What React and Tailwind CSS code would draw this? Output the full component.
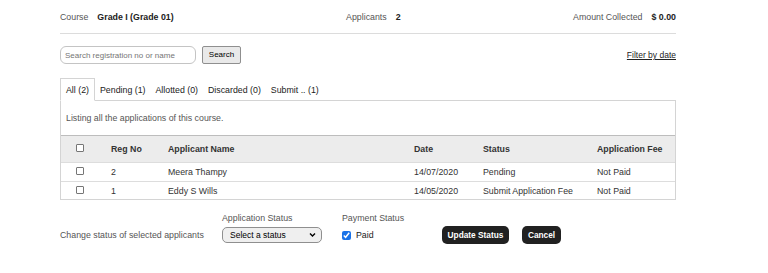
import React from "react";

function Check({ className = "" }) {
  return (
    <span className={"inline-block w-[8px] h-[8px] border border-[#767676] rounded-[1px] bg-white " + className} />
  );
}

export default function App() {
  const rows = [
    { reg: "2", name: "Meera Thampy", date: "14/07/2020", status: "Pending", fee: "Not Paid" },
    { reg: "1", name: "Eddy S Wills", date: "14/05/2020", status: "Submit Application Fee", fee: "Not Paid" },
  ];
  const tabs = ["All (2)", "Pending (1)", "Allotted (0)", "Discarded (0)", "Submit .. (1)"];
  return (
    <div className="w-[768px] h-[273px] bg-white font-['Liberation_Sans',Arial,sans-serif] text-[8.8px] leading-[10px] text-[#333]">
      <div className="ml-[60px] w-[616px]">
        {/* summary row */}
        <div className="h-[34px] flex items-center justify-between border-b border-[#dcdcdc]">
          <div className="flex items-center">
            <span className="text-[#555]">Course</span>
            <span className="ml-[9px] font-bold text-[#222]">Grade I (Grade 01)</span>
          </div>
          <div className="flex items-center">
            <span className="text-[#555]">Applicants</span>
            <span className="ml-[9px] font-bold text-[#222]">2</span>
          </div>
          <div className="flex items-center">
            <span className="text-[#555]">Amount Collected</span>
            <span className="ml-[9px] font-bold text-[#222]">$ 0.00</span>
          </div>
        </div>

        {/* search row */}
        <div className="mt-[12px] h-[18px] flex items-center justify-between">
          <div className="flex items-center">
            <input
              placeholder="Search registration no or name"
              className="w-[136px] h-[18px] rounded-[6px] border border-[#c4c4c4] px-[4px] text-[8px] text-[#333] placeholder:text-[#757575] outline-none"
            />
            <button className="ml-[6px] w-[39px] h-[18px] border border-[#8f8f8f] bg-[#e9e9e9] rounded-[2px] text-[8px] text-black">
              Search
            </button>
          </div>
          <a className="underline text-[8.5px] text-[#222]">Filter by date</a>
        </div>

        {/* tabs */}
        <div className="mt-[14px] flex h-[22px]">
          {tabs.map((t, i) => (
            <div
              key={t}
              className={
                "h-[23px] flex items-center border " +
                (i === 0
                  ? "px-[5px] border-[#d4d4d4] border-b-white bg-white relative z-10"
                  : "px-[4px] border-transparent")
              }
            >
              <span className="text-[#222]">{t}</span>
            </div>
          ))}
        </div>

        {/* panel */}
        <div className="border border-[#d4d4d4] h-[100px]">
          <div className="h-[34px] flex items-center pl-[5px] text-[#555]">
            Listing all the applications of this course.
          </div>
          <table className="w-full border-collapse table-fixed">
            <colgroup>
              <col className="w-[44px]" />
              <col className="w-[57px]" />
              <col className="w-[246px]" />
              <col className="w-[69px]" />
              <col className="w-[114px]" />
              <col />
            </colgroup>
            <thead>
              <tr className="h-[27px] bg-[#ececec] border-t border-[#bdbdbd]">
                <th className="text-left pl-[15px] font-normal"><Check className="border-[#8a8a8a]" /></th>
                <th className="text-left pl-[6px] font-bold">Reg No</th>
                <th className="text-left pl-[6px] font-bold">Applicant Name</th>
                <th className="text-left pl-[6px] font-bold">Date</th>
                <th className="text-left pl-[6px] font-bold">Status</th>
                <th className="text-left pl-[6px] font-bold">Application Fee</th>
              </tr>
            </thead>
            <tbody>
              {rows.map((r) => (
                <tr key={r.reg} className="h-[19px] border-t border-[#dddddd]">
                  <td className="pl-[15px]"><Check className="border-[#8a8a8a]" /></td>
                  <td className="pl-[6px]">{r.reg}</td>
                  <td className="pl-[6px]">{r.name}</td>
                  <td className="pl-[6px]">{r.date}</td>
                  <td className="pl-[6px]">{r.status}</td>
                  <td className="pl-[6px]">{r.fee}</td>
                </tr>
              ))}
            </tbody>
          </table>
        </div>

        {/* bulk actions */}
        <div className="mt-[13px] flex">
          <div className="w-[162px] flex flex-col gap-[3px]">
            <div className="h-[10px]" />
            <div className="h-[18px] flex items-center text-[#555]">Change status of selected applicants</div>
          </div>
          <div className="w-[120px] flex flex-col gap-[3px]">
            <div className="h-[10px] text-[#555]">Application Status</div>
            <div className="h-[18px] flex items-center">
              <div className="relative w-[100px] h-[16px]">
                <select className="appearance-none w-full h-full rounded-[5px] border border-[#8f8f8f] bg-[#efefef] pl-[7px] text-[8.5px] text-black outline-none">
                  <option>Select a status</option>
                </select>
                <svg className="absolute right-[6px] top-[5px] pointer-events-none" width="7" height="6" viewBox="0 0 7 6">
                  <path d="M1 1.5 L3.5 4 L6 1.5" fill="none" stroke="#000" strokeWidth="1.4" />
                </svg>
              </div>
            </div>
          </div>
          <div className="w-[100px] flex flex-col gap-[3px]">
            <div className="h-[10px] text-[#555]">Payment Status</div>
            <div className="h-[18px] flex items-center">
              <input type="checkbox" defaultChecked className="w-[9px] h-[9px] m-0 accent-[#1a73e8]" />
              <span className="ml-[5px] text-[#222]">Paid</span>
            </div>
          </div>
          <div className="flex flex-col gap-[3px]">
            <div className="h-[10px]" />
            <div className="h-[18px] flex items-center">
              <button className="w-[67px] h-[18px] rounded-[5px] bg-[#212121] text-white font-bold text-[8.3px]">
                Update Status
              </button>
              <button className="ml-[13px] w-[39px] h-[18px] rounded-[5px] bg-[#212121] text-white font-bold text-[8.3px]">
                Cancel
              </button>
            </div>
          </div>
        </div>
      </div>
    </div>
  );
}
